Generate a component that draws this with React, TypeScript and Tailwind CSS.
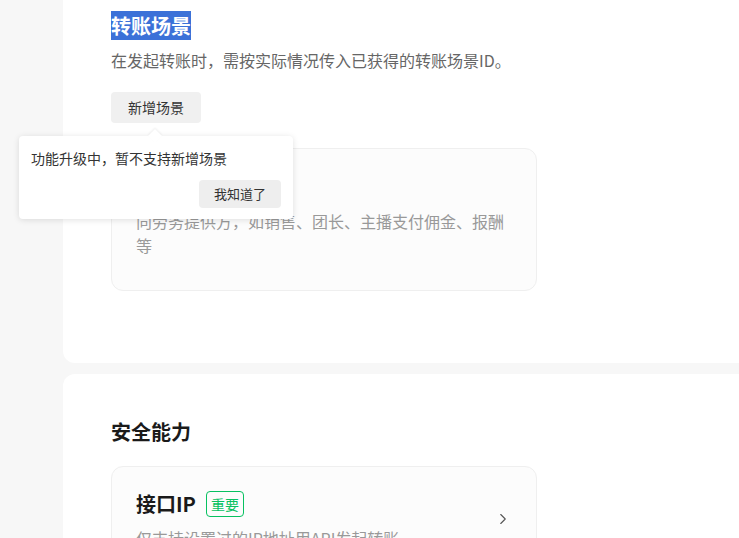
import React from 'react';
import { ChevronRight } from 'lucide-react';

const font = { fontFamily: '"Noto Sans CJK SC", "Noto Sans", sans-serif' };

const SceneCard: React.FC<{ title: string; desc: string; tag?: string; arrow?: boolean; className?: string }> = ({ title, desc, tag, arrow, className = '' }) => (
    <div className={`flex items-center w-[426px] rounded-[12px] border border-[#efefef] bg-[#fcfcfc] px-[24px] ${className}`}>
        <div className="flex-1 min-w-0">
            <div className="flex items-center gap-[10px]">
                <h3 className="text-[20px] leading-[28px] font-bold text-[#1a1a1a]">{title}</h3>
                {tag && (
                    <span className="h-[26px] px-[4px] rounded-[4px] border border-[#07c160] text-[#07c160] text-[14px] leading-[24px]">{tag}</span>
                )}
            </div>
            <p className="mt-[8px] text-[16px] leading-[24px] text-[#999]">{desc}</p>
        </div>
        {arrow && <ChevronRight className="w-[18px] h-[18px] text-[#555] ml-[8px] -mt-[2px]" strokeWidth={1.5} />}
    </div>
);

export default function App() {
    return (
        <div style={font} className="w-[739px] h-[538px] overflow-hidden bg-[#f7f7f7] pl-[63px]">
            <div className="w-[760px]">
                {/* 转账场景 */}
                <section className="relative bg-white rounded-b-[12px] pl-[48px] pt-[15px] h-[363px]">
                    <h2 className="text-[20px] leading-[22px] font-bold">
                        <span className="bg-[#3b71d8] text-white">转账场景</span>
                    </h2>
                    <p className="mt-[11px] text-[16px] leading-[24px] text-[#666]">在发起转账时，需按实际情况传入已获得的转账场景ID。</p>
                    <button className="mt-[20px] h-[31px] w-[90px] rounded-[4px] bg-[#f0f0f0] text-[14px] text-[#333]">新增场景</button>
                    <SceneCard className="mt-[25px] h-[143px] items-start pt-[24px]" title="佣金报酬" desc="向劳务提供方，如销售、团长、主播支付佣金、报酬等" />

                    {/* tooltip */}
                    <div className="absolute left-[-44px] top-[136px] w-[274px] h-[83px] rounded-[4px] bg-white shadow-[0_1px_6px_rgba(0,0,0,0.12)] px-[12px] pt-[12px]">
                        <div className="absolute left-[131px] top-[-5px] w-[10px] h-[10px] rotate-45 bg-white shadow-[-1px_-1px_2px_rgba(0,0,0,0.06)]" />
                        <p className="relative text-[14px] leading-[20px] text-[#333]">功能升级中，暂不支持新增场景</p>
                        <div className="flex justify-end mt-[12px]">
                            <button className="h-[28px] w-[82px] rounded-[4px] bg-[#eeeeee] text-[13px] text-[#333]">我知道了</button>
                        </div>
                    </div>
                </section>

                {/* 安全能力 */}
                <section className="mt-[11px] bg-white rounded-t-[12px] pl-[48px] pt-[44px] h-[300px]">
                    <h2 className="text-[20px] leading-[28px] font-bold text-[#1a1a1a]">安全能力</h2>
                    <SceneCard className="mt-[20px] pt-[23px] pb-[20px]" title="接口IP" tag="重要" arrow desc="仅支持设置过的IP地址用API发起转账" />
                </section>
            </div>
        </div>
    );
}
